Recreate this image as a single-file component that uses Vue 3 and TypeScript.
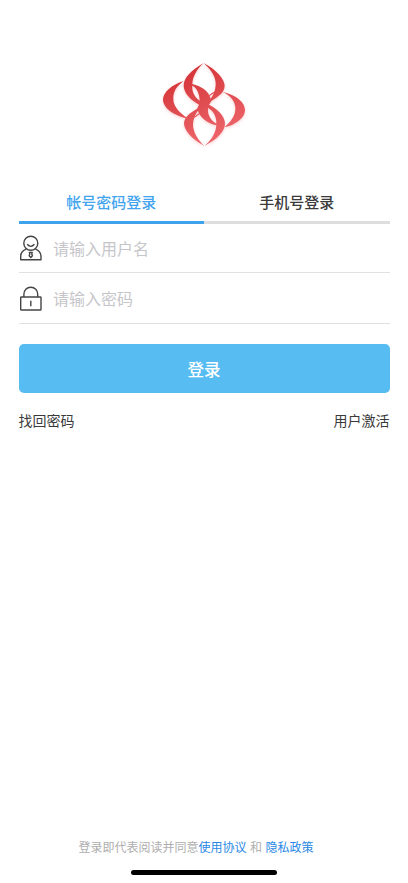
<script setup lang="ts">
import { ref } from 'vue'

type LoginMode = 'account' | 'phone'

const tabs: { id: LoginMode; label: string }[] = [
  { id: 'account', label: '帐号密码登录' },
  { id: 'phone', label: '手机号登录' },
]
const mode = ref<LoginMode>('account')
const username = ref('')
const password = ref('')
</script>

<template>
  <main class="login">
    <svg class="logo" viewBox="0 0 300 300" aria-hidden="true">
      <defs>
        <linearGradient id="petal" gradientUnits="userSpaceOnUse" x1="90" y1="30" x2="190" y2="275">
          <stop offset="0" stop-color="#d32f32" />
          <stop offset=".5" stop-color="#e04e52" />
          <stop offset="1" stop-color="#f0696e" />
        </linearGradient>
        <filter id="glow" x="-10%" y="-10%" width="120%" height="125%">
          <feDropShadow dx="0" dy="4" stdDeviation="4" flood-color="#ef777c" flood-opacity=".35" />
        </filter>
      </defs>
      <g fill="url(#petal)" filter="url(#glow)">
        <path d="M89 81C53 92 27 115 27 137C28 164 62 185 103 194C75 176 58 157 58 135C57 113 68 96 89 81Z" />
        <path d="M205 113C248 123 274 145 273 170C271 193 246 211 211 220C232 201 245 184 244 161C243 141 230 125 205 113Z" />
        <path
          fill-rule="evenodd"
          d="M149 27C188 48 212 75 212 96C211 117 192 128 173 140L165 152C192 166 212 186 213 208C213 232 190 256 151 276C114 256 90 229 90 208C91 187 110 176 129 164L135 152C110 138 90 118 89 96C88 72 112 48 149 27Z
            M149 27C127 48 117 66 115 90C140 96 164 110 170 134C178 124 184 110 185 94C187 70 172 48 149 27Z
            M151 276C130 256 117 234 117 210C118 194 124 180 132 170C138 192 162 207 187 214C185 236 175 256 151 276Z
            M115 95C130 103 136 119 137 140C122 129 113 112 115 95Z
            M162 162C180 172 187 188 187 209C170 199 160 182 162 162Z"
        />
        <path
          fill="none"
          stroke="url(#petal)"
          stroke-width="3.5"
          d="M189 112Q176 115 166 125M112 192Q126 189 136 179"
        />
      </g>
    </svg>

    <nav class="tabs">
      <button
        v-for="tab in tabs"
        :key="tab.id"
        class="tab"
        :class="{ active: mode === tab.id }"
        type="button"
        @click="mode = tab.id"
      >{{ tab.label }}</button>
    </nav>

    <form @submit.prevent>
      <label class="field">
        <svg class="icon" viewBox="0 0 24 26" aria-hidden="true">
          <circle cx="11.8" cy="8.3" r="7" />
          <path d="M8.2 9.3Q11.8 13.4 15.4 9.3M7.2 14.2C3.5 15.6 1.7 18 1.7 21.5V24.8H22V21.5C22 18 20.2 15.6 16.4 14.2" />
          <path d="M10.4 17.4H13.2L12.8 19L13.4 20.8L11.8 22.6L10.2 20.8L10.8 19Z" />
        </svg>
        <input v-model="username" type="text" placeholder="请输入用户名" />
      </label>
      <label class="field second">
        <svg class="icon" viewBox="0 0 24 26" aria-hidden="true">
          <path d="M4.9 12V9.3C4.9 5.3 7.8 2.3 11.8 2.3S18.7 5.3 18.7 9.3V12M11.8 15.8V21.2" />
          <rect x="1.7" y="12" width="20.3" height="13" rx=".6" />
        </svg>
        <input v-model="password" type="password" placeholder="请输入密码" />
      </label>
      <button class="submit" type="submit">登录</button>
    </form>

    <div class="links"><a>找回密码</a><a>用户激活</a></div>

    <footer class="agreement">
      <p>登录即代表阅读并同意<a>使用协议</a> 和 <a>隐私政策</a></p>
      <div class="home-bar"></div>
    </footer>
  </main>
</template>

<style>
body {
  background: #fff;
}
</style>

<style scoped>
.login {
  box-sizing: border-box;
  height: 883px;
  padding: 54px 18.5px 0;
  display: flex;
  flex-direction: column;
  font-family: "Noto Sans CJK SC", sans-serif;
  color: #3a3a3a;
  overflow: hidden;
}
.logo {
  width: 100px;
  height: 100px;
  margin-left: 135.5px;
  flex: none;
}
button,
input {
  font: inherit;
  border: 0;
  padding: 0;
  background: none;
  outline: none;
}
.tabs {
  display: flex;
  height: 42px;
  margin-top: 28px;
}
.tab {
  flex: 1;
  box-sizing: border-box;
  border-bottom: 3px solid #dedede;
  padding-bottom: 1px;
  font-size: 15px;
  font-weight: 500;
  color: #3a3a3a;
}
.tab.active {
  color: #42a4ee;
  border-bottom-color: #3fa2ed;
}
.field {
  box-sizing: border-box;
  display: flex;
  align-items: center;
  height: 49px;
  border-bottom: 1px solid #e1e1e1;
}
.field.second {
  height: 51px;
}
.icon {
  width: 24px;
  height: 26px;
  flex: none;
  fill: none;
  stroke: #444;
  stroke-width: 1.4;
  stroke-linejoin: round;
}
input {
  flex: 1;
  min-width: 0;
  margin-left: 10.5px;
  padding-bottom: 1px;
  font-size: 16px;
  line-height: 24px;
}
input::placeholder {
  color: #c6c6ca;
  opacity: 1;
}
.submit {
  display: block;
  width: 100%;
  height: 49px;
  margin-top: 20px;
  border-radius: 5px;
  background: #57bcf2;
  color: #fff;
  font-size: 16.5px;
  font-weight: 500;
}
.links {
  display: flex;
  justify-content: space-between;
  margin-top: 17px;
  font-size: 14px;
  line-height: 21px;
}
.agreement {
  margin-top: auto;
}
.agreement p {
  margin: 0 0 14px 60px;
  font-size: 12px;
  line-height: 18px;
  color: #aeaeae;
  white-space: nowrap;
  word-spacing: 0.8px;
}
.agreement a {
  color: #2a88e4;
}
.home-bar {
  width: 146px;
  height: 5px;
  margin: 0 auto 8px;
  border-radius: 3px;
  background: #000;
}
</style>
